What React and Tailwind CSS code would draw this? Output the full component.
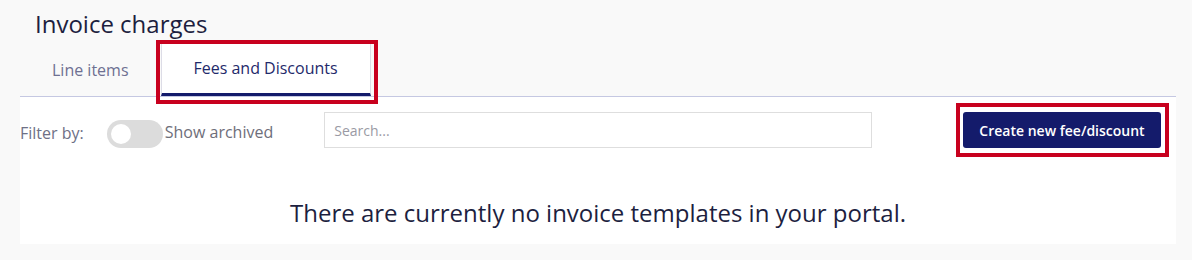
import React from "react";

const App = () => {
  return (
    <div
      className="w-[1192px] h-[260px] bg-[#f9f9f9] pl-[20px] pr-[16px] pt-[8px] overflow-hidden"
      style={{ fontFamily: '"Open Sans", "Noto Sans", sans-serif' }}
    >
      {/* Title */}
      <h1 className="pl-[15px] text-[24px] leading-[32px] text-[#1d1f3f]">Invoice charges</h1>

      {/* Tabs */}
      <div className="mt-[3px] flex border-b border-[#c5c8e2]">
        <button className="h-[53px] px-[32px] text-[16px] text-[#6e7092]">Line items</button>
        <div className="relative">
          <button className="h-[53px] w-[210px] bg-white border-x border-[#dcdce6] border-b-[3px] border-b-[#141b6b] text-[16px] text-[#1f2a6b]">
            Fees and Discounts
          </button>
          <span className="pointer-events-none absolute -left-[5px] -right-[7px] -top-[3px] -bottom-[8px] border-4 border-[#c8001e]" />
        </div>
      </div>

      {/* Panel */}
      <div className="bg-white h-[147px] pt-[15px]">
        <div className="flex items-center">
          <span className="mt-[6px] text-[16px] text-[#6e7086]">Filter by:</span>
          <div className="self-end ml-[23px] w-[56px] h-[28px] rounded-full bg-[#dcdcdc] flex items-center pl-[4px]">
            <div className="w-[20px] h-[20px] rounded-full bg-white" />
          </div>
          <span className="mt-[3px] ml-[2px] text-[16px] text-[#6e6e7a]">Show archived</span>
          <input
            placeholder="Search..."
            className="ml-[51px] w-[548px] h-[36px] border border-[#dedede] px-[9px] text-[14px] placeholder:text-[#9a9aa4] outline-none"
          />
          <div className="relative ml-auto mr-[15px]">
            <button className="w-[198px] h-[36px] rounded-[3px] bg-[#141b6b] text-white text-[14px] font-semibold">
              Create new fee/discount
            </button>
            <span className="pointer-events-none absolute -left-[7px] -right-[8px] -top-[9px] -bottom-[9px] border-4 border-[#c8001e]" />
          </div>
        </div>
        <p className="mt-[47px] text-center text-[24px] leading-[36px] text-[#1d1f3f]">
          There are currently no invoice templates in your portal.
        </p>
      </div>
    </div>
  );
};

export default App;
